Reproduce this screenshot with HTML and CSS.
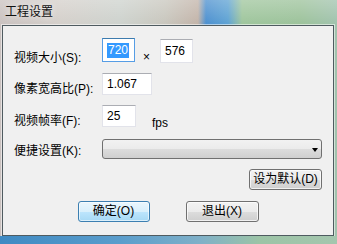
FILE: index.html
```html
<!DOCTYPE html>
<html lang="zh-CN">
<head>
    <meta charset="utf-8">
    <title>工程设置</title>
    <link rel="stylesheet" href="styles.css">
</head>
<body>
    <div class="window">
        <div class="titlebar">工程设置</div>

        <div class="client">
            <div class="row row-size">
                <label class="lbl lbl-size">视频大小(S):</label>
                <div class="field field-w focused"><span class="sel">720</span></div>
                <span class="times">×</span>
                <div class="field field-h">576</div>
            </div>

            <div class="row row-ratio">
                <label class="lbl lbl-mid">像素宽高比(P):</label>
                <div class="field field-ratio">1.067</div>
            </div>

            <div class="row row-fps">
                <label class="lbl lbl-mid">视频帧率(F):</label>
                <div class="field field-fps">25</div>
                <span class="unit">fps</span>
            </div>

            <div class="row row-preset">
                <label class="lbl lbl-preset">便捷设置(K):</label>
                <div class="combo">
                    <span class="arrow"></span>
                </div>
            </div>

            <div class="row row-default">
                <button class="btn btn-default-set">设为默认(D)</button>
            </div>

            <div class="row row-actions">
                <button class="btn btn-primary">确定(O)</button>
                <button class="btn btn-exit">退出(X)</button>
            </div>
        </div>
    </div>
</body>
</html>
```

FILE: styles.css
```css
html, body {
    margin: 0;
    padding: 0;
}

body {
    width: 337px;
    height: 244px;
    overflow: hidden;
    font-family: "Liberation Sans", "Noto Sans CJK SC", sans-serif;
    font-size: 12px;
    color: #000;
}

/* aero glass frame */
.window {
    width: 337px;
    height: 244px;
    box-sizing: border-box;
    padding: 0 3px 0 2px;
    display: flex;
    flex-direction: column;
    background:
        linear-gradient(180deg, rgba(255,255,255,0.25) 0, rgba(255,255,255,0) 25px),
        linear-gradient(90deg, #c9c1bf 0, #d4cfca 60px, #cdd2cd 120px, #c8c6bd 165px, #c2b3a8 198px, #4b8fcf 206px, #5da2d3 228px, #9ec59c 242px, #9cc29a 300px, #a0c2ad 337px);
}

.window::after {
    content: "";
    display: block;
    height: 8px;
    margin: 0 -3px 0 -2px;
    background: linear-gradient(90deg, #3f8ac3 0, #5a9dcc 120px, #7fb0c8 200px, #9cc4a6 260px, #a4c6ae 337px);
}

.titlebar {
    height: 25px;
    line-height: 24px;
    padding-left: 3px;
    font-size: 12px;
    color: #111;
    text-shadow: 0 0 6px rgba(255,255,255,0.9);
}

.client {
    flex: 1;
    background: #f0f0f0;
    border: 1px solid #4f5b60;
    box-shadow: 0 0 0 1px rgba(255,255,255,0.55);
    padding: 13px 11px 0 11px;
    display: flex;
    flex-direction: column;
    gap: 10px;
}

.row {
    display: flex;
    align-items: flex-start;
}

.row-size { height: 24px; }
.row-ratio { height: 22px; }
.row-fps { height: 23px; }
.row-preset { height: 20px; margin-top: 1px; }
.row-default { height: 21px; justify-content: flex-end; }
.row-actions { height: 21px; justify-content: center; gap: 36px; margin-top: 1px; }

.lbl {
    width: 88px;
    flex: none;
    line-height: 14px;
    white-space: nowrap;
}

.lbl-size { margin-top: 12px; }
.lbl-mid { margin-top: 9px; }
.lbl-preset { margin-top: 5px; }

/* text boxes */
.field {
    box-sizing: border-box;
    height: 23px;
    background: #fff;
    border: 1px solid #e2e3ea;
    border-top-color: #abadb3;
    padding-left: 4px;
    line-height: 21px;
    white-space: nowrap;
}

.field-w { width: 33px; height: 24px; line-height: 22px; margin-top: -1px; }
.field-h { width: 33px; height: 24px; line-height: 22px; margin-left: 10px; }
.field-ratio { width: 50px; height: 22px; line-height: 20px; }
.field-fps { width: 34px; height: 22px; line-height: 20px; }

.focused {
    border-color: #569de5;
    border-top-color: #3d7bad;
}

.sel {
    display: inline-block;
    background: #3399ff;
    color: #fff;
    line-height: 15px;
    padding: 0 1px;
}

.times {
    margin: 13px 0 0 8px;
    font-size: 12px;
    line-height: 10px;
}

.unit {
    margin: 11px 0 0 16px;
    line-height: 14px;
}

/* combo box */
.combo {
    position: relative;
    box-sizing: border-box;
    width: 220px;
    height: 20px;
    border: 1px solid #707070;
    border-radius: 3px;
    background: linear-gradient(180deg, #f2f2f2 0, #ebebeb 50%, #dddddd 50%, #cfcfcf 100%);
}

.arrow {
    position: absolute;
    right: 3px;
    top: 8px;
    width: 0;
    height: 0;
    border-left: 3.5px solid transparent;
    border-right: 3.5px solid transparent;
    border-top: 4px solid #000;
}

/* push buttons */
.btn {
    box-sizing: border-box;
    height: 21px;
    padding: 0;
    margin: 0;
    font: inherit;
    color: #000;
    border: 1px solid #707070;
    border-radius: 3px;
    background: linear-gradient(180deg, #f2f2f2 0, #ebebeb 50%, #dddddd 50%, #cfcfcf 100%);
    box-shadow: inset 0 0 0 1px rgba(255,255,255,0.7);
    line-height: 17px;
}

.btn-default-set { width: 73px; }
.btn-primary {
    width: 72px;
    border-color: #3c7fb1;
    background: linear-gradient(180deg, #eaf6fd 0, #d9f0fc 50%, #bee6fd 50%, #a7d9f5 100%);
    box-shadow: inset 0 0 0 1px rgba(255,255,255,0.6), 0 0 0 0 transparent;
}
.btn-exit { width: 73px; }
```
